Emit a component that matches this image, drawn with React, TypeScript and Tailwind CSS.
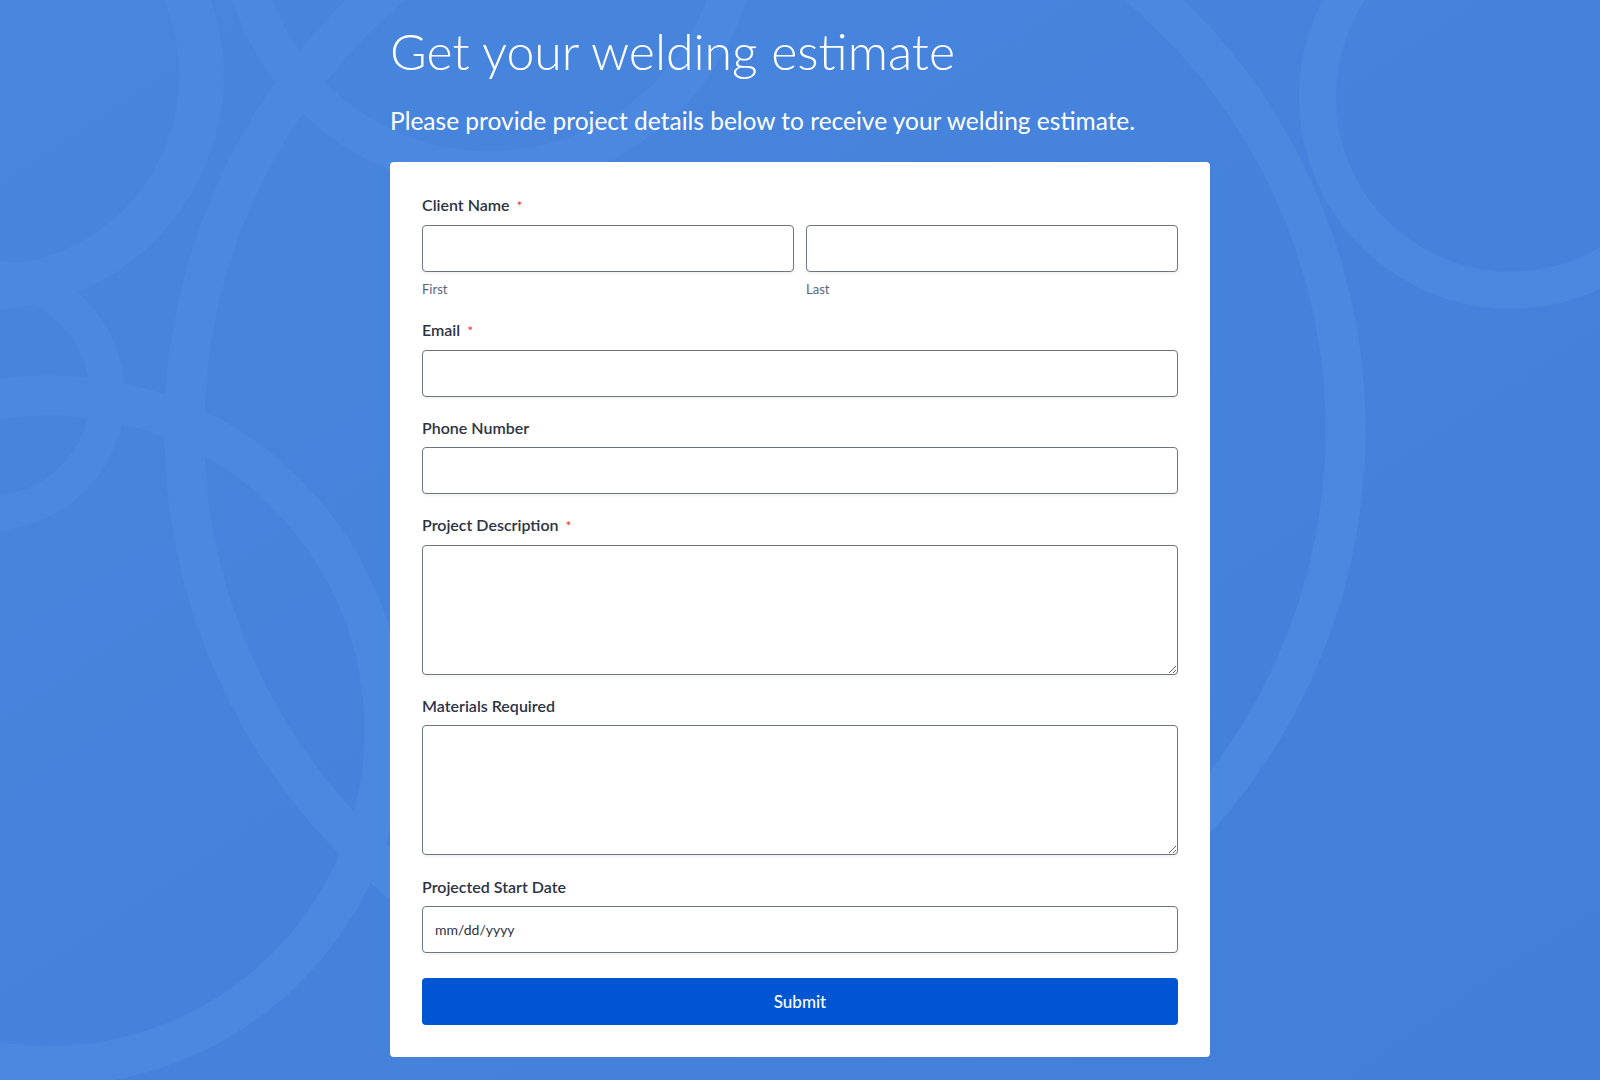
const rings = [
  { cx: -10, cy: 75, r: 212, w: 44 },
  { cx: 490, cy: -80, r: 250, w: 38 },
  { cx: 1510, cy: 97, r: 193, w: 37 },
  { cx: 765, cy: 430, r: 580, w: 40 },
  { cx: -10, cy: 395, r: 118, w: 35 },
  { cx: 50, cy: 730, r: 335, w: 40 },
]

function Background() {
  return (
    <svg
      className="pointer-events-none absolute inset-0 h-full w-full"
      viewBox="0 0 1600 1080"
      preserveAspectRatio="xMidYMid slice"
    >
      <defs>
        <linearGradient id="bg" x1="0" y1="0" x2="1" y2="1">
          <stop offset="0" stopColor="#4886de" />
          <stop offset="1" stopColor="#427fd9" />
        </linearGradient>
      </defs>
      <rect width="1600" height="1080" fill="url(#bg)" />
      {rings.map((c, i) => (
        <circle
          key={i}
          cx={c.cx}
          cy={c.cy}
          r={c.r}
          fill="none"
          stroke="#4b89e0"
          strokeWidth={c.w}
        />
      ))}
    </svg>
  )
}

function Label({ text, required }: { text: string; required?: boolean }) {
  return (
    <label className="block text-[16px] leading-[20px] font-semibold text-[#2c3345]">
      {text}
      {required && <span className="ml-[7px] text-[14px] font-normal text-[#e83a2e]">*</span>}
    </label>
  )
}

const inputCls =
  'block w-full h-[47px] rounded-[4px] border border-[#6f7480] bg-white px-3 text-[14px] text-[#2c3345] shadow-[0_2px_3px_rgba(0,0,0,0.05)] outline-none'

const areaCls =
  'block w-full h-[130px] rounded-[4px] border border-[#6f7480] bg-white px-3 py-2 text-[14px] text-[#2c3345] shadow-[0_2px_3px_rgba(0,0,0,0.05)] outline-none'

export default function App() {
  return (
    <div className="relative min-h-screen overflow-hidden font-['Lato','Open_Sans',sans-serif]">
      <Background />
      <div className="relative mx-auto w-[820px] pt-[22px] pb-6">
        <h1 className="text-[50px] leading-[58px] font-light text-white">Get your welding estimate</h1>
        <p className="mt-[27px] text-[24.5px] leading-[28px] font-normal text-white">
          Please provide project details below to receive your welding estimate.
        </p>

        <form
          className="mt-[27px] rounded-[4px] bg-white px-8 pt-[33px] pb-[32px]"
          onSubmit={(e) => e.preventDefault()}
        >
          {/* client name */}
          <div>
            <Label text="Client Name" required />
            <div className="mt-[9px] grid grid-cols-2 gap-3">
              <div>
                <input type="text" className={inputCls} />
                <div className="mt-[9px] text-[13px] leading-[16px] text-[#57647e]">First</div>
              </div>
              <div>
                <input type="text" className={inputCls} />
                <div className="mt-[9px] text-[13px] leading-[16px] text-[#57647e]">Last</div>
              </div>
            </div>
          </div>

          <div className="mt-[23px]">
            <Label text="Email" required />
            <input type="email" className={`mt-[9px] ${inputCls}`} />
          </div>

          <div className="mt-[21px]">
            <Label text="Phone Number" />
            <input type="tel" className={`mt-[9px] ${inputCls}`} />
          </div>

          <div className="mt-[21px]">
            <Label text="Project Description" required />
            <textarea className={`mt-[9px] ${areaCls}`} />
          </div>

          <div className="mt-[21px]">
            <Label text="Materials Required" />
            <textarea className={`mt-[9px] ${areaCls}`} />
          </div>

          <div className="mt-[22px]">
            <Label text="Projected Start Date" />
            <input
              type="text"
              placeholder="mm/dd/yyyy"
              className={`mt-[9px] placeholder:text-[#2c3345] ${inputCls}`}
            />
          </div>

          <button
            type="submit"
            className="mt-[25px] block h-[47px] w-full rounded-[4px] bg-[#0056d2] text-[17px] font-medium text-white"
          >
            Submit
          </button>
        </form>
      </div>
    </div>
  )
}
